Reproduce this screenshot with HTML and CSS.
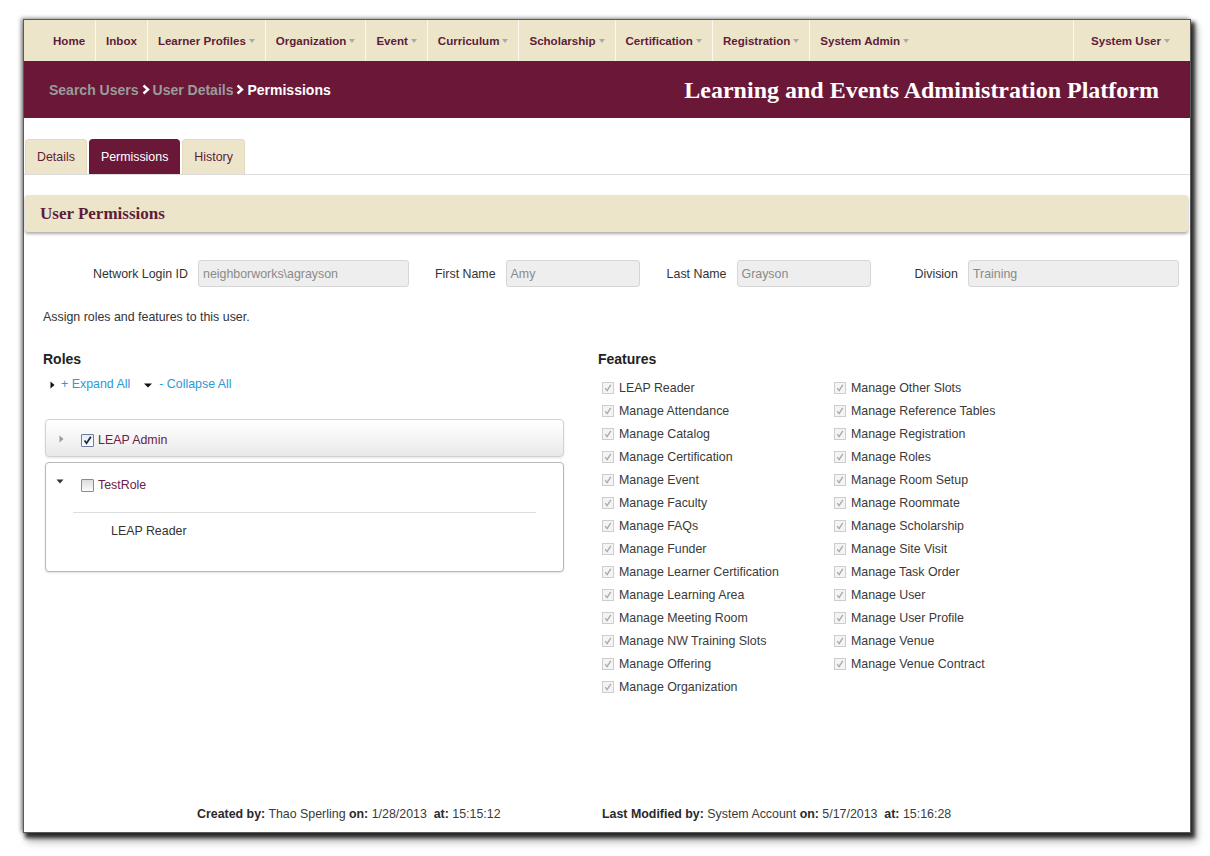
FILE: index.html
```html
<!DOCTYPE html>
<html lang="en">
<head>
<meta charset="utf-8">
<title>User Permissions</title>
<link rel="stylesheet" href="styles.css">
</head>
<body>
<div class="window">
  <nav class="topnav">
    <a class="nav-item sep">Home</a>
    <a class="nav-item sep">Inbox</a>
    <a class="nav-item sep">Learner Profiles<span class="caret"></span></a>
    <a class="nav-item sep">Organization<span class="caret"></span></a>
    <a class="nav-item sep">Event<span class="caret"></span></a>
    <a class="nav-item sep">Curriculum<span class="caret"></span></a>
    <a class="nav-item sep">Scholarship<span class="caret"></span></a>
    <a class="nav-item sep">Certification<span class="caret"></span></a>
    <a class="nav-item sep">Registration<span class="caret"></span></a>
    <a class="nav-item">System Admin<span class="caret"></span></a>
    <span class="nav-spacer"></span>
    <a class="nav-item user">System User<span class="caret"></span></a>
  </nav>

  <header class="banner">
    <div class="crumbs">
      <span class="crumb-link">Search Users</span>
      <svg class="chev" width="8" height="11" viewBox="0 0 8 11"><path d="M1.5 1.5 L6 5.5 L1.5 9.5" fill="none" stroke="#fff" stroke-width="2.4"/></svg>
      <span class="crumb-link">User Details</span>
      <svg class="chev" width="8" height="11" viewBox="0 0 8 11"><path d="M1.5 1.5 L6 5.5 L1.5 9.5" fill="none" stroke="#fff" stroke-width="2.4"/></svg>
      <span class="crumb-current">Permissions</span>
    </div>
    <h1 class="title">Learning and Events Administration Platform</h1>
  </header>

  <div class="tabs">
    <a class="tab">Details</a>
    <a class="tab active">Permissions</a>
    <a class="tab">History</a>
  </div>

  <div class="section-head">User Permissions</div>

  <div class="content">
    <div class="form-row">
      <label class="lbl lbl-first">Network Login ID</label>
      <div class="field wide">neighborworks\agrayson</div>
      <label class="lbl lbl-2">First Name</label>
      <div class="field narrow">Amy</div>
      <label class="lbl lbl-3">Last Name</label>
      <div class="field narrow">Grayson</div>
      <label class="lbl lbl-4">Division</label>
      <div class="field wide">Training</div>
    </div>

    <p class="intro">Assign roles and features to this user.</p>

    <div class="cols">
      <div class="roles">
        <h2 class="col-title">Roles</h2>
        <div class="expand-row">
          <svg class="tri-r" width="5" height="8" viewBox="0 0 5 8"><path d="M0.5 0.5 L4.5 4 L0.5 7.5 Z" fill="#111"/></svg>
          <a class="link">+ Expand All</a>
          <svg class="tri-d" width="8" height="5" viewBox="0 0 8 5"><path d="M0 0.5 L8 0.5 L4 4.5 Z" fill="#111"/></svg>
          <a class="link">- Collapse All</a>
        </div>

        <div class="role-panel collapsed">
          <div class="role-head">
            <svg class="p-tri" width="5" height="8" viewBox="0 0 5 8"><path d="M0.5 0.5 L4.5 4 L0.5 7.5 Z" fill="#9a9a9a"/></svg>
            <span class="cb cb-checked"><svg width="11" height="11" viewBox="0 0 11 11"><path d="M2.5 5.5 L4.6 8.3 L8.8 1.8" fill="none" stroke="#1d2a4a" stroke-width="1.8"/></svg></span>
            <span class="role-name">LEAP Admin</span>
          </div>
        </div>

        <div class="role-panel open">
          <div class="role-head">
            <svg class="p-tri-d" width="8" height="5" viewBox="0 0 8 5"><path d="M0.5 0.5 L7.5 0.5 L4 4.5 Z" fill="#333"/></svg>
            <span class="cb cb-empty"></span>
            <span class="role-name">TestRole</span>
          </div>
          <div class="role-body">
            <div class="role-feature">LEAP Reader</div>
          </div>
        </div>
      </div>

      <div class="features">
        <h2 class="col-title">Features</h2>
        <ul class="feature-list">
          <li><span class="fcb"></span>LEAP Reader</li>
          <li><span class="fcb"></span>Manage Attendance</li>
          <li><span class="fcb"></span>Manage Catalog</li>
          <li><span class="fcb"></span>Manage Certification</li>
          <li><span class="fcb"></span>Manage Event</li>
          <li><span class="fcb"></span>Manage Faculty</li>
          <li><span class="fcb"></span>Manage FAQs</li>
          <li><span class="fcb"></span>Manage Funder</li>
          <li><span class="fcb"></span>Manage Learner Certification</li>
          <li><span class="fcb"></span>Manage Learning Area</li>
          <li><span class="fcb"></span>Manage Meeting Room</li>
          <li><span class="fcb"></span>Manage NW Training Slots</li>
          <li><span class="fcb"></span>Manage Offering</li>
          <li><span class="fcb"></span>Manage Organization</li>
          <li><span class="fcb"></span>Manage Other Slots</li>
          <li><span class="fcb"></span>Manage Reference Tables</li>
          <li><span class="fcb"></span>Manage Registration</li>
          <li><span class="fcb"></span>Manage Roles</li>
          <li><span class="fcb"></span>Manage Room Setup</li>
          <li><span class="fcb"></span>Manage Roommate</li>
          <li><span class="fcb"></span>Manage Scholarship</li>
          <li><span class="fcb"></span>Manage Site Visit</li>
          <li><span class="fcb"></span>Manage Task Order</li>
          <li><span class="fcb"></span>Manage User</li>
          <li><span class="fcb"></span>Manage User Profile</li>
          <li><span class="fcb"></span>Manage Venue</li>
          <li><span class="fcb"></span>Manage Venue Contract</li>
        </ul>
      </div>
    </div>
  </div>

  <footer class="audit">
    <div class="audit-item created"><b>Created by:</b> Thao Sperling <b>on:</b> 1/28/2013&nbsp; <b>at:</b> 15:15:12</div>
    <div class="audit-item"><b>Last Modified by:</b> System Account <b>on:</b> 5/17/2013&nbsp; <b>at:</b> 15:16:28</div>
  </footer>
</div>
</body>
</html>
```

FILE: styles.css
```css
* { box-sizing: border-box; }

html, body {
  margin: 0;
  padding: 0;
  background: #ffffff;
}

body {
  font-family: "Liberation Sans", Arial, sans-serif;
  font-size: 12.4px;
  color: #333;
  padding: 20px 0 24px 24px;
  min-height: 856px;
}

.window {
  width: 1166px;
  height: 812px;
  background: #fff;
  display: flex;
  flex-direction: column;
  box-shadow: 0 0 0 1px #5a5a5a,
              3px 4px 4px 2px rgba(0, 0, 0, 0.78),
              5px 8px 8px 2px rgba(0, 0, 0, 0.25),
              -2px -1px 4px 1px rgba(0, 0, 0, 0.4);
}

/* ---------- top nav ---------- */
.topnav {
  display: flex;
  height: 41px;
  background: #ede5c9;
  padding-left: 19px;
}

.nav-item {
  display: flex;
  align-items: center;
  padding: 0 10px;
  font-size: 11.55px;
  font-weight: bold;
  color: #5e1c3a;
  white-space: nowrap;
}

.nav-item.sep { border-right: 1px solid #fbf8ef; }

.nav-item.user {
  border-left: 1px solid #fbf8ef;
  padding: 0 20px 0 17px;
}

.nav-spacer { flex: 1; }

.caret {
  display: inline-block;
  width: 0;
  height: 0;
  margin-left: 3px;
  margin-top: 1px;
  border-top: 4px solid #a9a9a9;
  border-left: 3.5px solid transparent;
  border-right: 3.5px solid transparent;
}

/* ---------- banner ---------- */
.banner {
  height: 57px;
  background: #6b1838;
  display: flex;
  align-items: center;
  justify-content: space-between;
  padding: 0 31px 0 25px;
}

.crumbs {
  display: flex;
  align-items: center;
  font-size: 14px;
  font-weight: bold;
}

.crumb-link { color: #9b9b9b; }
.crumb-current { color: #fff; }

.chev { margin: 0 3px 0 3px; }

.title {
  margin: 2px 0 0 0;
  font-family: "Liberation Serif", "Times New Roman", serif;
  font-size: 24px;
  font-weight: bold;
  color: #fff;
}

/* ---------- tabs ---------- */
.tabs {
  margin-top: 21px;
  display: flex;
  gap: 2px;
  padding-left: 1px;
  border-bottom: 1px solid #dcdcdc;
}

.tab {
  height: 35px;
  line-height: 34px;
  padding: 0 11px;
  background: #ede5c9;
  color: #5e1c3a;
  border: 1px solid #e2d9bd;
  border-bottom: none;
  border-radius: 4px 4px 0 0;
}

.tab.active {
  background: #6b1838;
  border-color: #6b1838;
  color: #fff;
}

/* ---------- section head ---------- */
.section-head {
  margin: 20px 2px 0 1px;
  height: 37px;
  line-height: 37px;
  padding-left: 15px;
  background: #ede5c9;
  border-radius: 3px;
  box-shadow: 0 2px 3px rgba(0, 0, 0, 0.32);
  font-family: "Liberation Serif", "Times New Roman", serif;
  font-size: 17px;
  font-weight: bold;
  color: #5e1c3a;
}

/* ---------- content ---------- */
.content {
  padding-left: 19px;
}

.form-row {
  margin-top: 28px;
  display: flex;
  align-items: center;
}

.lbl {
  color: #333;
  margin-right: 10px;
  white-space: nowrap;
}

.lbl-first { width: 145px; text-align: right; }
.lbl-2 { margin-left: 26px; }
.lbl-3 { margin-left: 27px; }
.lbl-4 { margin-left: 44px; }

.field {
  height: 27px;
  line-height: 26px;
  padding-left: 4px;
  background: #eeeeee;
  border: 1px solid #d6d6d6;
  border-radius: 3px;
  color: #8a8a8a;
}

.field.wide { width: 211px; }
.field.narrow { width: 134px; }

.intro {
  margin: 21px 0 0 0;
  line-height: 18px;
  color: #333;
}

.cols {
  margin-top: 24px;
  display: flex;
}

.roles { width: 555px; }

.col-title {
  margin: 0;
  font-size: 14px;
  font-weight: bold;
  line-height: 18px;
  color: #222;
}

.expand-row {
  margin-top: 7px;
  height: 18px;
  display: flex;
  align-items: center;
  padding-left: 7px;
}

.tri-r { margin-right: 6px; margin-top: 2px; }
.tri-d { margin: 2px 7px 0 14px; }

.link { color: #2b9ad6; }

.role-panel {
  width: 519px;
  margin-left: 2px;
  border-radius: 4px;
}

.role-panel.collapsed {
  margin-top: 26px;
  height: 38px;
  border: 1px solid #d2d2d2;
  background: linear-gradient(#ffffff, #f4f4f4 55%, #e8e8e8);
  box-shadow: 0 1px 2px rgba(0, 0, 0, 0.12);
}

.role-panel.open {
  margin-top: 5px;
  height: 110px;
  border: 1px solid #b8b8b8;
  background: #fff;
  box-shadow: 0 1px 2px rgba(0, 0, 0, 0.12);
}

.role-head {
  display: flex;
  align-items: center;
  height: 40px;
}

.collapsed .role-head { padding-left: 13px; }

.open .role-head {
  height: 44px;
  padding-left: 10px;
}

.p-tri { margin-right: 17px; margin-top: -3px; }
.p-tri-d { margin-right: 17px; margin-top: -8px; }

.cb {
  width: 13px;
  height: 13px;
  margin-right: 4px;
  border-radius: 1px;
  display: flex;
  align-items: center;
  justify-content: center;
}

.cb-checked {
  border: 1px solid #6f7f99;
  background: linear-gradient(#e6ecf4, #ffffff);
}

.cb-empty {
  border: 1px solid #8c8c8c;
  background: linear-gradient(#dcdcdc, #fbfbfb);
}

.role-name { color: #6b2048; }

.role-body {
  margin: 5px 27px 0 27px;
  border-top: 1px solid #dedede;
}

.role-feature {
  margin-top: 9px;
  padding-left: 38px;
  line-height: 18px;
  color: #333;
}

/* ---------- features ---------- */
.features { flex: 1; }

.feature-list {
  list-style: none;
  margin: 8px 0 0 0;
  padding: 0 0 0 4px;
  display: grid;
  grid-template-columns: 232px 232px;
  grid-template-rows: repeat(14, 23px);
  grid-auto-flow: column;
}

.feature-list li {
  display: flex;
  align-items: center;
  color: #3a3a3a;
  white-space: nowrap;
}

.fcb {
  width: 12px;
  height: 12px;
  margin-right: 5px;
  border: 1px solid #cdcdcd;
  background: #f4f4f4 url("data:image/svg+xml;utf8,<svg xmlns='http://www.w3.org/2000/svg' width='10' height='10' viewBox='0 0 10 10'><path d='M2.2 5.2 L4.1 7.6 L7.8 1.8' fill='none' stroke='%23a8a8a8' stroke-width='1.3'/></svg>") center / 10px 10px no-repeat;
}

/* ---------- footer ---------- */
.audit {
  margin-top: auto;
  padding: 0 0 9px 173px;
  display: flex;
  line-height: 18px;
  color: #3a3a3a;
}

.audit b { color: #2a2a2a; }

.audit-item.created { width: 405px; }
```
